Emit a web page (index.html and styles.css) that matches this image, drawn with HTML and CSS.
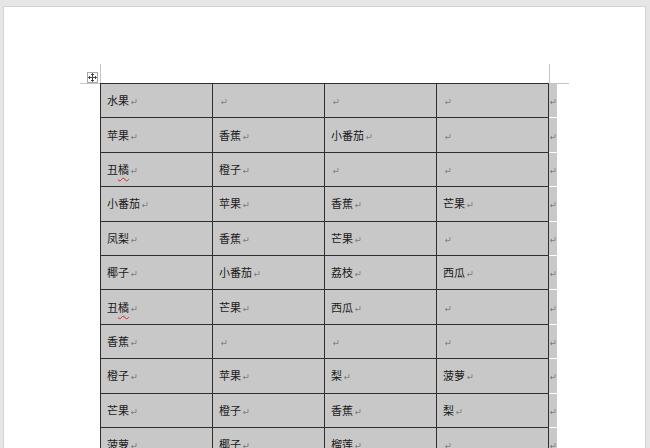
FILE: index.html
```html
<!DOCTYPE html>
<html lang="zh">
<head>
<meta charset="utf-8">
<link rel="stylesheet" href="styles.css">
</head>
<body>
<div class="page">
  <div class="tablewrap">
    <span class="crop crop-tl-v"></span>
    <span class="crop crop-tl-h"></span>
    <span class="crop crop-tr-v"></span>
    <span class="crop crop-tr-h"></span>
    <span class="handle">
      <svg width="9" height="9" viewBox="0 0 9 9"><path d="M4.5 0.5V8.5M0.5 4.5H8.5M3 2L4.5 0.5L6 2M3 7L4.5 8.5L6 7M2 3L0.5 4.5L2 6M7 3L8.5 4.5L7 6" fill="none" stroke="#444" stroke-width="1"/></svg>
    </span>
    <div class="grid">
      <div class="cell first lead"><span class="txt">水果</span><i class="pm"></i></div>
      <div class="cell first"><span class="txt"></span><i class="pm"></i></div>
      <div class="cell first"><span class="txt"></span><i class="pm"></i></div>
      <div class="cell first"><span class="txt"></span><i class="pm"></i></div>
      <div class="strip"><i class="pm"></i></div>

      <div class="cell lead"><span class="txt">苹果</span><i class="pm"></i></div>
      <div class="cell"><span class="txt">香蕉</span><i class="pm"></i></div>
      <div class="cell"><span class="txt">小番茄</span><i class="pm"></i></div>
      <div class="cell"><span class="txt"></span><i class="pm"></i></div>
      <div class="strip"><i class="pm"></i></div>

      <div class="cell lead"><span class="txt">丑<span class="sp">橘</span></span><i class="pm"></i></div>
      <div class="cell"><span class="txt">橙子</span><i class="pm"></i></div>
      <div class="cell"><span class="txt"></span><i class="pm"></i></div>
      <div class="cell"><span class="txt"></span><i class="pm"></i></div>
      <div class="strip"><i class="pm"></i></div>

      <div class="cell lead"><span class="txt">小番茄</span><i class="pm"></i></div>
      <div class="cell"><span class="txt">苹果</span><i class="pm"></i></div>
      <div class="cell"><span class="txt">香蕉</span><i class="pm"></i></div>
      <div class="cell"><span class="txt">芒果</span><i class="pm"></i></div>
      <div class="strip"><i class="pm"></i></div>

      <div class="cell lead"><span class="txt">凤梨</span><i class="pm"></i></div>
      <div class="cell"><span class="txt">香蕉</span><i class="pm"></i></div>
      <div class="cell"><span class="txt">芒果</span><i class="pm"></i></div>
      <div class="cell"><span class="txt"></span><i class="pm"></i></div>
      <div class="strip"><i class="pm"></i></div>

      <div class="cell lead"><span class="txt">椰子</span><i class="pm"></i></div>
      <div class="cell"><span class="txt">小番茄</span><i class="pm"></i></div>
      <div class="cell"><span class="txt">荔枝</span><i class="pm"></i></div>
      <div class="cell"><span class="txt">西瓜</span><i class="pm"></i></div>
      <div class="strip"><i class="pm"></i></div>

      <div class="cell lead"><span class="txt">丑<span class="sp">橘</span></span><i class="pm"></i></div>
      <div class="cell"><span class="txt">芒果</span><i class="pm"></i></div>
      <div class="cell"><span class="txt">西瓜</span><i class="pm"></i></div>
      <div class="cell"><span class="txt"></span><i class="pm"></i></div>
      <div class="strip"><i class="pm"></i></div>

      <div class="cell lead"><span class="txt">香蕉</span><i class="pm"></i></div>
      <div class="cell"><span class="txt"></span><i class="pm"></i></div>
      <div class="cell"><span class="txt"></span><i class="pm"></i></div>
      <div class="cell"><span class="txt"></span><i class="pm"></i></div>
      <div class="strip"><i class="pm"></i></div>

      <div class="cell lead"><span class="txt">橙子</span><i class="pm"></i></div>
      <div class="cell"><span class="txt">苹果</span><i class="pm"></i></div>
      <div class="cell"><span class="txt">梨</span><i class="pm"></i></div>
      <div class="cell"><span class="txt">菠萝</span><i class="pm"></i></div>
      <div class="strip"><i class="pm"></i></div>

      <div class="cell lead"><span class="txt">芒果</span><i class="pm"></i></div>
      <div class="cell"><span class="txt">橙子</span><i class="pm"></i></div>
      <div class="cell"><span class="txt">香蕉</span><i class="pm"></i></div>
      <div class="cell"><span class="txt">梨</span><i class="pm"></i></div>
      <div class="strip"><i class="pm"></i></div>

      <div class="cell lead"><span class="txt">菠萝</span><i class="pm"></i></div>
      <div class="cell"><span class="txt">椰子</span><i class="pm"></i></div>
      <div class="cell"><span class="txt">榴莲</span><i class="pm"></i></div>
      <div class="cell"><span class="txt"></span><i class="pm"></i></div>
      <div class="strip"><i class="pm"></i></div>
    </div>
  </div>
</div>
</body>
</html>
```
FILE: styles.css
```css
html, body {
  margin: 0;
  padding: 0;
  background: #e6e6e6;
  overflow: hidden;
  height: 448px;
}
.page {
  margin: 6px 4px 0 3px;
  background: #ffffff;
  border: 1px solid #d4d4d4;
  border-bottom: none;
  height: 520px;
  padding: 76px 0 0 96px;
  box-sizing: border-box;
}
.tablewrap {
  position: relative;
  width: 460px;
}
.grid {
  display: grid;
  grid-template-columns: 113px 112px 112px 112px 8px;
  grid-template-rows: 35.4px;
  grid-auto-rows: 34.4px;
}
.cell {
  box-sizing: border-box;
  background: #c8c8c8;
  border-right: 1px solid #2e2e2e;
  border-bottom: 1px solid #2e2e2e;
  display: flex;
  align-items: center;
  padding-left: 6px;
  font-family: "Noto Sans CJK SC", "Noto Sans", sans-serif;
  font-size: 11px;
  color: #1a1a1a;
  line-height: 1;
}
.cell.lead {
  border-left: 1px solid #2e2e2e;
}
.cell.first {
  border-top: 1px solid #2e2e2e;
}
.txt {
  display: inline-block;
}
.sp {
  text-decoration: underline wavy #e02020;
  text-decoration-thickness: 1px;
  text-underline-offset: 3px;
}
.pm {
  display: block;
  width: 7px;
  height: 6px;
  margin-left: 1px;
  margin-top: 3px;
  background: url("data:image/svg+xml;utf8,<svg xmlns='http://www.w3.org/2000/svg' width='7' height='6' viewBox='0 0 7 6'><path d='M6 0V3.5H1.5M3 2L1.2 3.5L3 5' fill='none' stroke='%238a8a8a' stroke-width='1'/></svg>") no-repeat;
}
.strip {
  box-sizing: border-box;
  background: #c8c8c8;
  border-bottom: 1px solid #ffffff;
  display: flex;
  align-items: center;
}
.strip .pm {
  margin-left: 0;
}
.crop {
  position: absolute;
  background: #c4c4c4;
}
.crop-tl-v { left: 0; top: -19px; width: 1px; height: 19px; }
.crop-tl-h { left: -20px; top: 0; width: 20px; height: 1px; }
.crop-tr-v { left: 449px; top: -19px; width: 1px; height: 19px; }
.crop-tr-h { left: 449px; top: 0; width: 20px; height: 1px; }
.handle {
  position: absolute;
  left: -13px;
  top: -11px;
  width: 9px;
  height: 9px;
  border: 1px solid #a8a8a8;
  background: #fff;
  display: flex;
  align-items: center;
  justify-content: center;
}
```
